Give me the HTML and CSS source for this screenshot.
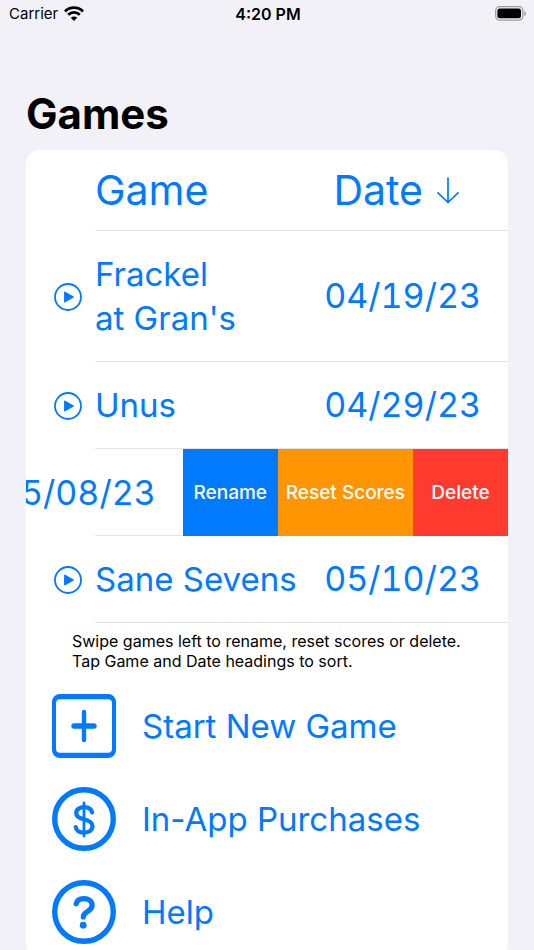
FILE: index.html
```html
<!DOCTYPE html>
<html lang="en">
<head>
    <meta charset="UTF-8">
    <meta name="viewport" content="width=device-width, initial-scale=1.0">
    <title>Games</title>
    <link rel="stylesheet" href="styles.css">
</head>
<body>
    <!-- Status bar -->
    <div class="status-bar">
        <div class="carrier">
            <span>Carrier</span>
            <svg class="wifi" width="20" height="15" viewBox="0 0 20 15" aria-hidden="true">
                <g fill="none" stroke="#000" stroke-width="2.8">
                    <path d="M1 5.4a12.8 12.8 0 0 1 18 0"/>
                    <path d="M4.2 8.8a8.3 8.3 0 0 1 11.6 0"/>
                </g>
                <path d="M6.8 11.7a4.6 4.6 0 0 1 6.4 0L10 14.9z"/>
            </svg>
        </div>
        <div class="time">4:20 PM</div>
        <div class="battery">
            <svg width="32" height="15" viewBox="0 0 32 15" aria-hidden="true">
                <rect x="0.7" y="0.7" width="27.2" height="13.4" rx="4" fill="none" stroke="#9c9ca0" stroke-width="1.3"/>
                <rect x="2.4" y="2.5" width="23.6" height="9.8" rx="2.2"/>
                <path d="M29.3 5v5c2.2-.8 2.2-4.2 0-5z" fill="#9c9ca0"/>
            </svg>
        </div>
    </div>

    <main class="container">
        <h1>Games</h1>

        <div class="card">
            <table class="games">
                <thead>
                    <tr>
                        <td class="play-cell"></td>
                        <th class="name-cell"><button type="button" class="sort">Game</button></th>
                        <th class="date-cell">
                            <button type="button" class="sort">
                                Date
                                <svg width="22" height="27" viewBox="0 0 22 27" aria-hidden="true">
                                    <path d="M11 1v24.5M1 15.8l10 9.7 10-9.7" fill="none" stroke="currentColor" stroke-width="1.7" stroke-linecap="round" stroke-linejoin="round"/>
                                </svg>
                            </button>
                        </th>
                    </tr>
                </thead>
                <tbody>
                    <tr>
                        <td class="play-cell">
                            <button type="button" class="play" aria-label="Play Frackel at Gran's">
                                <svg width="28" height="28" viewBox="0 0 28 28">
                                    <circle cx="14" cy="14" r="13" fill="none" stroke="currentColor" stroke-width="1.8"/>
                                    <path d="M10.6 8.9v10.2l9-5.1z" fill="currentColor" stroke="currentColor" stroke-width="1" stroke-linejoin="round"/>
                                </svg>
                            </button>
                        </td>
                        <td class="name-cell">Frackel<br>at Gran's</td>
                        <td class="date-cell">04/19/23</td>
                    </tr>
                    <tr>
                        <td class="play-cell">
                            <button type="button" class="play" aria-label="Play Unus">
                                <svg width="28" height="28" viewBox="0 0 28 28">
                                    <circle cx="14" cy="14" r="13" fill="none" stroke="currentColor" stroke-width="1.8"/>
                                    <path d="M10.6 8.9v10.2l9-5.1z" fill="currentColor" stroke="currentColor" stroke-width="1" stroke-linejoin="round"/>
                                </svg>
                            </button>
                        </td>
                        <td class="name-cell">Unus</td>
                        <td class="date-cell">04/29/23</td>
                    </tr>
                    <!-- Row swiped left -->
                    <tr class="swiped">
                        <td colspan="3">
                            <div class="swipe">
                                <span class="swipe-date">05/08/23</span>
                                <button type="button" class="action rename">Rename</button>
                                <button type="button" class="action reset">Reset Scores</button>
                                <button type="button" class="action delete">Delete</button>
                            </div>
                        </td>
                    </tr>
                    <tr>
                        <td class="play-cell">
                            <button type="button" class="play" aria-label="Play Sane Sevens">
                                <svg width="28" height="28" viewBox="0 0 28 28">
                                    <circle cx="14" cy="14" r="13" fill="none" stroke="currentColor" stroke-width="1.8"/>
                                    <path d="M10.6 8.9v10.2l9-5.1z" fill="currentColor" stroke="currentColor" stroke-width="1" stroke-linejoin="round"/>
                                </svg>
                            </button>
                        </td>
                        <td class="name-cell">Sane Sevens</td>
                        <td class="date-cell">05/10/23</td>
                    </tr>
                </tbody>
            </table>

            <p class="hint">Swipe games left to rename, reset scores or delete.<br>Tap Game and Date headings to sort.</p>

            <!-- Menu -->
            <div class="menu">
                <button type="button" class="menu-item">
                    <svg width="64" height="64" viewBox="0 0 64 64" aria-hidden="true">
                        <path fill="currentColor" fill-rule="evenodd" d="M8 0h48a8 8 0 0 1 8 8v48a8 8 0 0 1-8 8H8a8 8 0 0 1-8-8V8a8 8 0 0 1 8-8zM8 5.2a4 4 0 0 0-4 4v45.6a4 4 0 0 0 4 4h48a4 4 0 0 0 4-4V9.2a4 4 0 0 0-4-4z"/>
                        <path d="M32 18v28" stroke="currentColor" stroke-width="4.4" stroke-linecap="round"/>
                        <path d="M22 32h20" stroke="currentColor" stroke-width="5.4" stroke-linecap="round"/>
                    </svg>
                    Start New Game
                </button>
                <button type="button" class="menu-item">
                    <svg width="64" height="64" viewBox="0 0 64 64" aria-hidden="true">
                        <circle cx="32" cy="32" r="29.3" fill="none" stroke="currentColor" stroke-width="5.4"/>
                        <g fill="none" stroke="currentColor" stroke-linecap="round">
                            <path d="M32 16v33" stroke-width="2.8"/>
                            <path d="M40 25.4c-.7-3.4-3.6-5.2-7.9-5.2-4.6 0-7.9 2.3-7.9 5.9 0 3.3 2.3 5 7.6 6.1 5.8 1.3 8.7 3 8.7 6.9 0 4.1-3.4 6.5-8.4 6.5-4.7 0-7.8-2-8.4-5.6" stroke-width="4.2"/>
                        </g>
                    </svg>
                    In-App Purchases
                </button>
                <button type="button" class="menu-item">
                    <svg width="64" height="64" viewBox="0 0 64 64" aria-hidden="true">
                        <circle cx="32" cy="32" r="29.3" fill="none" stroke="currentColor" stroke-width="5.4"/>
                        <path d="M24.2 23.8c.7-3.3 3.5-5.2 7.7-5.2 4.7 0 8.2 2.5 8.2 6.5 0 3-1.5 4.7-4.5 6.5-3.3 2-4.3 3-4.3 5.3" fill="none" stroke="currentColor" stroke-width="5.2" stroke-linecap="round" stroke-linejoin="round"/>
                        <circle cx="31.2" cy="45.2" r="3.4" fill="currentColor"/>
                    </svg>
                    Help
                </button>
            </div>
        </div>
    </main>
</body>
</html>
```
FILE: styles.css
```css
:root {
    --blue: #007aff;
    --orange: #ff9502;
    --red: #ff3b30;
    --line: #e3e3e5;
    --bg: #f2f1f7;
}

* {
    margin: 0;
    padding: 0;
    box-sizing: border-box;
}

body {
    height: 100vh;
    overflow: hidden;
    background: var(--bg);
    color: #000;
    font-family: Inter, "Liberation Sans", sans-serif;
}

button {
    border: 0;
    background: none;
    color: inherit;
    font: inherit;
    cursor: pointer;
}

svg {
    display: block;
    flex: none;
}

/* Status bar */
.status-bar {
    display: grid;
    grid-template-columns: 1fr auto 1fr;
    align-items: center;
    height: 26px;
    padding: 1px 7px 0 9px;
    font-size: 15px;
}

.carrier {
    display: flex;
    align-items: center;
    gap: 6px;
}

.time {
    font-size: 16px;
    font-weight: 600;
}

.battery {
    justify-self: end;
}

/* Card */
.container {
    padding: 62px 26px 0;
}

h1 {
    margin-bottom: 10px;
    font-size: 42px;
    line-height: 52px;
    font-weight: 700;
}

.card {
    padding-bottom: 14px;
    background: #fff;
    border-radius: 14px;
    overflow: hidden;
}

/* Games table */
.games {
    width: 100%;
    border-collapse: separate;
    border-spacing: 0;
    color: var(--blue);
    font-size: 33px;
    line-height: 44px;
}

.games tr {
    height: 87px;
}

.games thead tr {
    height: 81px;
}

.games th {
    font-size: 41px;
    font-weight: 400;
    text-align: left;
}

.play-cell {
    width: 69px;
    padding-left: 28px;
}

.play {
    display: block;
}

.name-cell,
.date-cell {
    border-bottom: 1px solid var(--line);
}

.games tbody .name-cell {
    padding: 21px 0;
}

.date-cell {
    padding-right: 27px;
    text-align: right;
    white-space: nowrap;
}

td.date-cell,
.swipe-date {
    font-size: 34px;
    font-variant-numeric: tabular-nums;
}

th.date-cell {
    padding-right: 49px;
}

.sort {
    display: flex;
    align-items: center;
    gap: 14px;
}

th.date-cell .sort {
    margin-left: auto;
}

/* Swiped row, the separator starts at the name column */
.swipe {
    display: flex;
    justify-content: flex-end;
    align-items: stretch;
    height: 87px;
    overflow: hidden;
    background: linear-gradient(var(--line), var(--line)) 69px 100% / 100% 1px no-repeat;
}

.swipe-date {
    flex: none;
    align-self: center;
    padding-right: 27px;
}

.action {
    flex: none;
    min-width: 95px;
    padding: 0 8px;
    color: #fff;
    font-size: 19px;
    font-weight: 500;
}

.rename { background: var(--blue); }
.reset { background: var(--orange); }
.delete { background: var(--red); }

.hint {
    padding: 8px 0 0 46px;
    font-size: 16px;
    line-height: 20px;
}

/* Menu */
.menu {
    display: flex;
    flex-direction: column;
    gap: 29px;
    padding: 23px 26px 0;
    color: var(--blue);
    font-size: 33px;
}

.menu-item {
    display: flex;
    align-items: center;
    gap: 26px;
    text-align: left;
}
```
